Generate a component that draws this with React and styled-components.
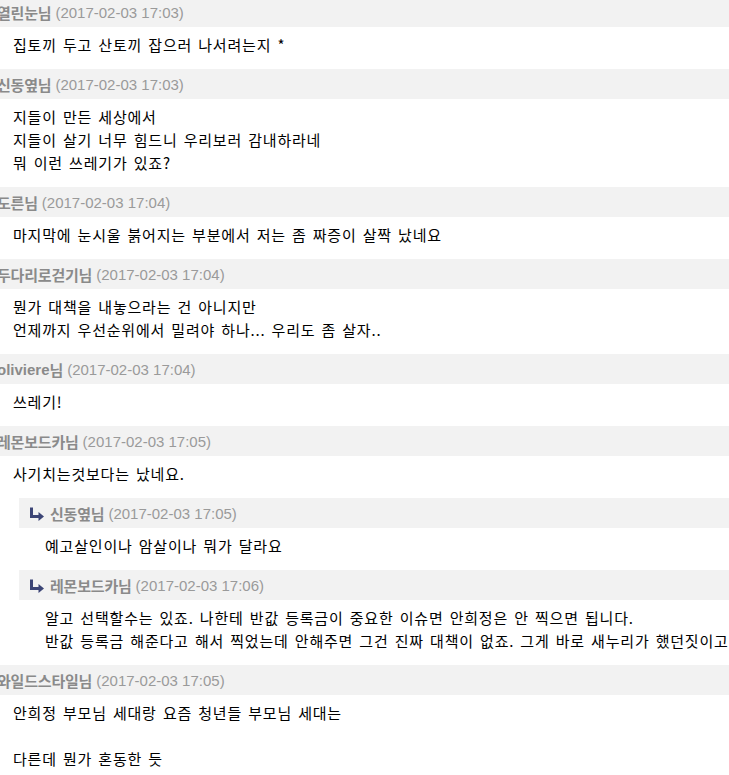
import React from "react";
import styled, { createGlobalStyle } from "styled-components";

const Global = createGlobalStyle`
  html, body { margin: 0; padding: 0; background: #fff; }
  body { overflow: hidden; }
`;

const Page = styled.div`
  width: 729px;
  overflow: hidden;
  margin-top: -3px;
  font-family: "Liberation Sans", "Noto Sans CJK KR", sans-serif;
`;

const Comment = styled.div`
  display: flex;
  flex-direction: column;
`;

const Header = styled.div`
  height: 30px;
  background: #f2f2f2;
  display: flex;
  align-items: center;
  white-space: nowrap;
  padding-left: ${(p) => (p.$reply ? "11px" : "0")};
  margin-left: ${(p) => (p.$reply ? "0" : "-3px")};
`;

const Name = styled.span`
  font-family: "Noto Sans CJK KR", "Liberation Sans", sans-serif;
  font-weight: 700;
  font-size: 15px;
  color: #8a8a8a;
  letter-spacing: -0.2px;
`;

const Nick = styled.span`
  font-family: "Liberation Sans", sans-serif;
  font-weight: 700;
  font-size: 15px;
  color: #8a8a8a;
`;

const DateText = styled.span`
  font-family: "Liberation Sans", sans-serif;
  font-size: 15px;
  color: #9a9a9a;
  margin-left: 4px;
`;

const Body = styled.div`
  padding: 6px 0 13px ${(p) => (p.$reply ? "26px" : "13px")};
  font-family: "Noto Sans CJK KR", sans-serif;
  font-size: 15px;
  line-height: 23px;
  letter-spacing: 0.8px;
  word-spacing: 2px;
  color: #000;
  white-space: pre;
`;

const Replies = styled.div`
  margin-left: 19px;
  display: flex;
  flex-direction: column;
`;

const ArrowIcon = styled.svg`
  width: 15px;
  height: 15px;
  margin-right: 5px;
  flex: none;
`;

const Arrow = () => (
  <ArrowIcon viewBox="0 0 15 15">
    <path d="M1.5 1.5 V10.5 H9" fill="none" stroke="#3c4576" strokeWidth="3" />
    <path d="M8.5 6 L14 10.5 L8.5 15 Z" fill="#3c4576" />
  </ArrowIcon>
);

const data = [
  { name: "열린눈님", date: "2017-02-03 17:03", lines: ["집토끼 두고 산토끼 잡으러 나서려는지 *"] },
  {
    name: "신동옆님",
    date: "2017-02-03 17:03",
    lines: ["지들이 만든 세상에서", "지들이 살기 너무 힘드니 우리보러 감내하라네", "뭐 이런 쓰레기가 있죠?"],
  },
  { name: "도른님", date: "2017-02-03 17:04", lines: ["마지막에 눈시울 붉어지는 부분에서 저는 좀 짜증이 살짝 났네요"] },
  {
    name: "두다리로걷기님",
    date: "2017-02-03 17:04",
    lines: ["뭔가 대책을 내놓으라는 건 아니지만", "언제까지 우선순위에서 밀려야 하나... 우리도 좀 살자.."],
  },
  { name: "oliviere", suffix: "님", latin: true, date: "2017-02-03 17:04", lines: ["쓰레기!"] },
  {
    name: "레몬보드카님",
    date: "2017-02-03 17:05",
    lines: ["사기치는것보다는 났네요."],
    replies: [
      { name: "신동옆님", date: "2017-02-03 17:05", lines: ["예고살인이나 암살이나 뭐가 달라요"] },
      {
        name: "레몬보드카님",
        date: "2017-02-03 17:06",
        lines: [
          "알고 선택할수는 있죠. 나한테 반값 등록금이 중요한 이슈면 안희정은 안 찍으면 됩니다.",
          "반값 등록금 해준다고 해서 찍었는데 안해주면 그건 진짜 대책이 없죠. 그게 바로 새누리가 했던짓이고",
        ],
      },
    ],
  },
  {
    name: "와일드스타일님",
    date: "2017-02-03 17:05",
    lines: ["안희정 부모님 세대랑 요즘 청년들 부모님 세대는", "", "다른데 뭔가 혼동한 듯"],
  },
];

const Lines = ({ lines }) =>
  lines.map((l, i) => <div key={i}>{l === "" ? "\u00a0" : l}</div>);

const HeaderContent = ({ c }) => (
  <>
    {c.latin ? (
      <>
        <Nick>{c.name}</Nick>
        <Name>{c.suffix}</Name>
      </>
    ) : (
      <Name>{c.name}</Name>
    )}
    <DateText>({c.date})</DateText>
  </>
);

export default function App() {
  return (
    <>
      <Global />
      <Page>
        {data.map((c, i) => (
          <Comment key={i}>
            <Header>
              <HeaderContent c={c} />
            </Header>
            <Body>
              <Lines lines={c.lines} />
            </Body>
            {c.replies && (
              <Replies>
                {c.replies.map((r, j) => (
                  <Comment key={j}>
                    <Header $reply>
                      <Arrow />
                      <HeaderContent c={r} />
                    </Header>
                    <Body $reply>
                      <Lines lines={r.lines} />
                    </Body>
                  </Comment>
                ))}
              </Replies>
            )}
          </Comment>
        ))}
      </Page>
    </>
  );
}
